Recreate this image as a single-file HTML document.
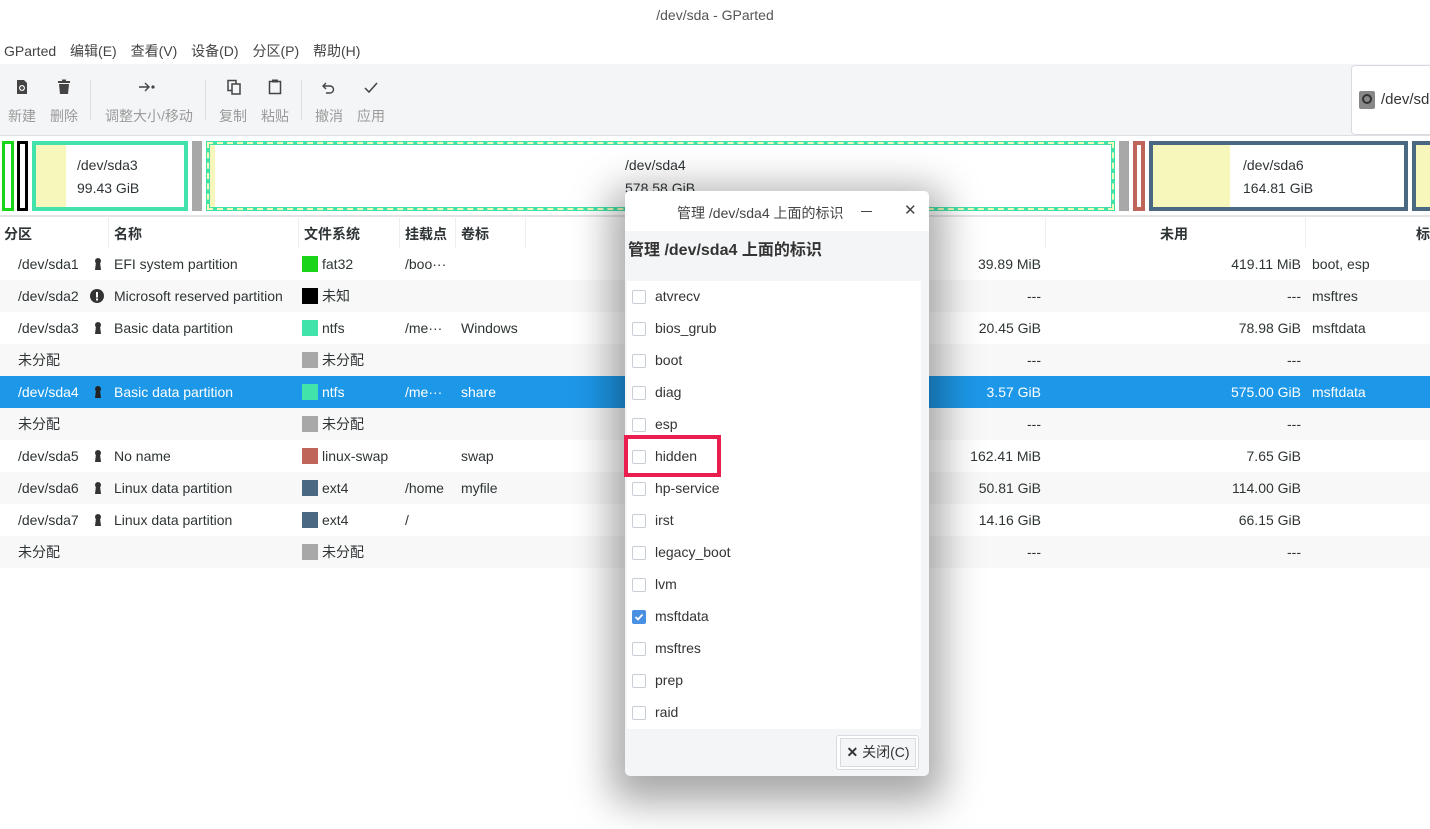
<!DOCTYPE html>
<html><head><meta charset="utf-8"><style>
*{box-sizing:border-box;margin:0;padding:0}
body{width:1430px;height:829px;overflow:hidden;background:#fff;font-family:"Liberation Sans","Noto Sans CJK SC",sans-serif;font-size:14px;color:#2e3436;position:relative}
.a{position:absolute;white-space:nowrap}
.tb{color:#9a9a9a;font-size:14px}
.row{position:absolute;left:0;width:1430px;height:32px;line-height:32px}
.row span{position:absolute;white-space:nowrap}
.row svg{position:absolute;top:9px;left:93px}
.sw{display:inline-block;width:16px;height:16px;position:absolute;top:8px;left:302px}
.r{text-align:right}
.cb{position:absolute;left:632px;width:14px;height:14px;border:1px solid #c8cdd6;border-radius:2px;background:#fff}
.ci{position:absolute;left:655px;font-size:14px;color:#333}
</style></head><body>
<div class="a" style="left:0;top:0;width:1430px;height:34px;text-align:center;line-height:30px;color:#555">/dev/sda - GParted</div>
<div class="a" style="top:41px;left:4px;color:#444;word-spacing:10px">GParted 编辑(E) 查看(V) 设备(D) 分区(P) 帮助(H)</div>
<div class="a" style="left:0;top:64px;width:1430px;height:72px;background:#f4f5f7;border-bottom:1px solid #e0e0e0"></div>
<svg class="a" style="left:14px;top:79px" width="16" height="16" viewBox="0 0 16 16"><path d="M3 1h7l3 3v11H3z" fill="#444"/><circle cx="8" cy="9" r="3" fill="#f4f5f7"/><path d="M8 7v4M6 9h4" stroke="#444" stroke-width="1.5"/></svg>
<svg class="a" style="left:56px;top:79px" width="16" height="16" viewBox="0 0 16 16"><rect x="2" y="2" width="12" height="2" fill="#444"/><rect x="6" y="0.5" width="4" height="2" fill="#444"/><path d="M3 5h10l-1 10H4z" fill="#444"/></svg>
<svg class="a" style="left:138px;top:79px" width="20" height="16" viewBox="0 0 20 16"><path d="M1 8h10M7 4l4 4-4 4" stroke="#444" stroke-width="1.4" fill="none"/><circle cx="15" cy="8" r="1.6" fill="#444"/></svg>
<svg class="a" style="left:226px;top:79px" width="16" height="16" viewBox="0 0 16 16"><rect x="2" y="1.5" width="8" height="10" fill="none" stroke="#444" stroke-width="1.5"/><rect x="6" y="5" width="8" height="10" fill="#f4f5f7" stroke="#444" stroke-width="1.5"/></svg>
<svg class="a" style="left:267px;top:79px" width="16" height="16" viewBox="0 0 16 16"><rect x="2.5" y="2.5" width="11" height="12" fill="none" stroke="#444" stroke-width="1.5"/><rect x="5" y="0.5" width="6" height="3" fill="#444"/></svg>
<svg class="a" style="left:321px;top:80px" width="16" height="16" viewBox="0 0 16 16"><path d="M5 3L2 6l3 3" stroke="#444" stroke-width="1.4" fill="none"/><path d="M2 6h7a3.5 3.5 0 010 7H5" stroke="#444" stroke-width="1.4" fill="none"/></svg>
<svg class="a" style="left:363px;top:80px" width="16" height="16" viewBox="0 0 16 16"><path d="M2 8l4 4 8-9" stroke="#444" stroke-width="1.5" fill="none"/></svg>
<div class="a tb" style="left:8px;top:106px">新建</div><div class="a tb" style="left:50px;top:106px">删除</div>
<div class="a tb" style="left:105px;top:106px">调整大小/移动</div>
<div class="a tb" style="left:219px;top:106px">复制</div><div class="a tb" style="left:261px;top:106px">粘贴</div>
<div class="a tb" style="left:315px;top:106px">撤消</div><div class="a tb" style="left:357px;top:106px">应用</div>
<div class="a" style="left:90px;top:80px;width:1px;height:40px;background:#ddd"></div>
<div class="a" style="left:205px;top:80px;width:1px;height:40px;background:#ddd"></div>
<div class="a" style="left:301px;top:80px;width:1px;height:40px;background:#ddd"></div>
<div class="a" style="left:1351px;top:65px;width:90px;height:70px;background:#fff;border:1px solid #d8dbe2;border-radius:4px"></div>
<div class="a" style="left:1359px;top:91px;width:16px;height:18px;background:#888;border-radius:2px"></div>
<div class="a" style="left:1362px;top:94px;width:10px;height:10px;border:2px solid #333;border-radius:50%"></div>
<div class="a" style="left:1381px;top:91px;color:#333;font-size:15px">/dev/sd</div>
<!-- map -->
<div class="a" style="left:2px;top:141px;width:12px;height:70px;border:3px solid #19d419"></div>
<div class="a" style="left:17px;top:141px;width:11px;height:70px;border:3px solid #000"></div>
<div class="a" style="left:32px;top:141px;width:156px;height:70px;border:4px solid #42e3ab;background:linear-gradient(90deg,#f7f7bb 30px,#fff 30px)"></div>
<div class="a" style="left:77px;top:157px">/dev/sda3</div><div class="a" style="left:77px;top:180px">99.43 GiB</div>
<div class="a" style="left:192px;top:141px;width:10px;height:70px;background:#a8a8a8"></div>
<div class="a" style="left:206px;top:141px;width:909px;height:70px;border:4px solid #42e3ab;background:linear-gradient(90deg,#f7f7bb 5px,#fff 5px)"></div>
<div class="a" style="left:207px;top:142px;width:907px;height:68px;border:2px dashed #f7f7bb"></div>
<div class="a" style="left:625px;top:157px">/dev/sda4</div><div class="a" style="left:625px;top:180px">578.58 GiB</div>
<div class="a" style="left:1119px;top:141px;width:10px;height:70px;background:#a8a8a8"></div>
<div class="a" style="left:1133px;top:141px;width:12px;height:70px;border:4px solid #bf6559"></div>
<div class="a" style="left:1149px;top:141px;width:259px;height:70px;border:4px solid #4b6882;background:linear-gradient(90deg,#f7f7bb 77px,#fff 77px)"></div>
<div class="a" style="left:1243px;top:157px">/dev/sda6</div><div class="a" style="left:1243px;top:180px">164.81 GiB</div>
<div class="a" style="left:1412px;top:141px;width:30px;height:70px;border:4px solid #4b6882;background:#f7f7bb"></div>
<div class="a" style="left:0;top:215px;width:1430px;height:2px;background:#e4e4e4"></div>
<!-- header -->
<div class="a" style="top:224px;left:4px;font-weight:bold">分区</div>
<div class="a" style="top:224px;left:114px;font-weight:bold">名称</div>
<div class="a" style="top:224px;left:304px;font-weight:bold">文件系统</div>
<div class="a" style="top:224px;left:405px;font-weight:bold">挂载点</div>
<div class="a" style="top:224px;left:461px;font-weight:bold">卷标</div>
<div class="a" style="top:224px;left:1160px;font-weight:bold">未用</div>
<div class="a" style="top:224px;left:1416px;font-weight:bold">标</div>
<div class="a" style="top:218px;left:108px;width:1px;height:30px;background:#eee"></div>
<div class="a" style="top:218px;left:298px;width:1px;height:30px;background:#eee"></div>
<div class="a" style="top:218px;left:399px;width:1px;height:30px;background:#eee"></div>
<div class="a" style="top:218px;left:455px;width:1px;height:30px;background:#eee"></div>
<div class="a" style="top:218px;left:525px;width:1px;height:30px;background:#eee"></div>
<div class="a" style="top:218px;left:1045px;width:1px;height:30px;background:#eee"></div>
<div class="a" style="top:218px;left:1305px;width:1px;height:30px;background:#eee"></div>

<div class="row" style="top:248px"><span style="left:18px">/dev/sda1</span><svg width="10" height="14" viewBox="0 0 10 14"><circle cx="5" cy="4" r="3" fill="#333"/><path d="M3 5h4l1 8H2z" fill="#333"/></svg><span style="left:114px">EFI system partition</span><i class="sw" style="background:#19d419"></i><span style="left:322px">fat32</span><span style="left:405px">/boo···</span><span class="r" style="right:389px">39.89 MiB</span><span class="r" style="right:129px">419.11 MiB</span><span style="left:1312px">boot, esp</span></div>
<div class="row" style="top:280px;background:#f8f8f8"><span style="left:18px">/dev/sda2</span><svg width="14" height="14" viewBox="0 0 14 14" style="left:90px"><circle cx="7" cy="7" r="7" fill="#333"/><rect x="6" y="3" width="2" height="5.5" fill="#fff"/><rect x="6" y="9.5" width="2" height="2" fill="#fff"/></svg><span style="left:114px">Microsoft reserved partition</span><i class="sw" style="background:#000"></i><span style="left:322px">未知</span><span class="r" style="right:389px">---</span><span class="r" style="right:129px">---</span><span style="left:1312px">msftres</span></div>
<div class="row" style="top:312px"><span style="left:18px">/dev/sda3</span><svg width="10" height="14" viewBox="0 0 10 14"><circle cx="5" cy="4" r="3" fill="#333"/><path d="M3 5h4l1 8H2z" fill="#333"/></svg><span style="left:114px">Basic data partition</span><i class="sw" style="background:#42e3ab"></i><span style="left:322px">ntfs</span><span style="left:405px">/me···</span><span style="left:461px">Windows</span><span class="r" style="right:389px">20.45 GiB</span><span class="r" style="right:129px">78.98 GiB</span><span style="left:1312px">msftdata</span></div>
<div class="row" style="top:344px;background:#f8f8f8"><span style="left:18px">未分配</span><i class="sw" style="background:#a8a8a8"></i><span style="left:322px">未分配</span><span class="r" style="right:389px">---</span><span class="r" style="right:129px">---</span></div>
<div class="row" style="top:376px;background:#1d98e8;color:#fff"><span style="left:18px">/dev/sda4</span><svg width="10" height="14" viewBox="0 0 10 14"><circle cx="5" cy="4" r="3" fill="#222"/><path d="M3 5h4l1 8H2z" fill="#222"/></svg><span style="left:114px">Basic data partition</span><i class="sw" style="background:#42e3ab"></i><span style="left:322px">ntfs</span><span style="left:405px">/me···</span><span style="left:461px">share</span><span class="r" style="right:389px">3.57 GiB</span><span class="r" style="right:129px">575.00 GiB</span><span style="left:1312px">msftdata</span></div>
<div class="row" style="top:408px;background:#f8f8f8"><span style="left:18px">未分配</span><i class="sw" style="background:#a8a8a8"></i><span style="left:322px">未分配</span><span class="r" style="right:389px">---</span><span class="r" style="right:129px">---</span></div>
<div class="row" style="top:440px"><span style="left:18px">/dev/sda5</span><svg width="10" height="14" viewBox="0 0 10 14"><circle cx="5" cy="4" r="3" fill="#333"/><path d="M3 5h4l1 8H2z" fill="#333"/></svg><span style="left:114px">No name</span><i class="sw" style="background:#bf6559"></i><span style="left:322px">linux-swap</span><span style="left:461px">swap</span><span class="r" style="right:389px">162.41 MiB</span><span class="r" style="right:129px">7.65 GiB</span></div>
<div class="row" style="top:472px;background:#f8f8f8"><span style="left:18px">/dev/sda6</span><svg width="10" height="14" viewBox="0 0 10 14"><circle cx="5" cy="4" r="3" fill="#333"/><path d="M3 5h4l1 8H2z" fill="#333"/></svg><span style="left:114px">Linux data partition</span><i class="sw" style="background:#4b6882"></i><span style="left:322px">ext4</span><span style="left:405px">/home</span><span style="left:461px">myfile</span><span class="r" style="right:389px">50.81 GiB</span><span class="r" style="right:129px">114.00 GiB</span></div>
<div class="row" style="top:504px"><span style="left:18px">/dev/sda7</span><svg width="10" height="14" viewBox="0 0 10 14"><circle cx="5" cy="4" r="3" fill="#333"/><path d="M3 5h4l1 8H2z" fill="#333"/></svg><span style="left:114px">Linux data partition</span><i class="sw" style="background:#4b6882"></i><span style="left:322px">ext4</span><span style="left:405px">/</span><span class="r" style="right:389px">14.16 GiB</span><span class="r" style="right:129px">66.15 GiB</span></div>
<div class="row" style="top:536px;background:#f8f8f8"><span style="left:18px">未分配</span><i class="sw" style="background:#a8a8a8"></i><span style="left:322px">未分配</span><span class="r" style="right:389px">---</span><span class="r" style="right:129px">---</span></div>
<!-- dialog -->
<div class="a" style="left:625px;top:191px;width:304px;height:585px;background:#f4f5f7;border-radius:5px;box-shadow:0 12px 40px 14px rgba(0,0,0,.35)">
<div class="a" style="left:0;top:0;width:304px;height:40px;background:#fff;border-radius:5px 5px 0 0"></div>
<div class="a" style="left:52px;top:12px;color:#444">管理 /dev/sda4 上面的标识</div>
<div class="a" style="left:236px;top:20px;width:11px;height:1px;background:#444"></div>
<div class="a" style="left:279px;top:10px;color:#444;font-size:15px">✕</div>
<div class="a" style="left:3px;top:45px;font-weight:bold;font-size:16px;color:#333">管理 /dev/sda4 上面的标识</div>
<div class="a" style="left:2px;top:90px;width:294px;height:448px;background:#fff"></div>
<div class="a" style="left:211px;top:544px;width:83px;height:35px;border:1px solid #d8dbe2;border-radius:3px;background:#fff"></div>
<div class="a" style="left:215px;top:547px;width:76px;height:29px;border:1px solid #d8dbe2;background:#f4f5f7;text-align:center;line-height:27px;font-size:14px;color:#333"><b>✕</b> 关闭(C)</div>
</div>
<div class="cb" style="top:290px"></div><div class="ci" style="top:288px">atvrecv</div>
<div class="cb" style="top:322px"></div><div class="ci" style="top:320px">bios_grub</div>
<div class="cb" style="top:354px"></div><div class="ci" style="top:352px">boot</div>
<div class="cb" style="top:386px"></div><div class="ci" style="top:384px">diag</div>
<div class="cb" style="top:418px"></div><div class="ci" style="top:416px">esp</div>
<div class="cb" style="top:450px"></div><div class="ci" style="top:448px">hidden</div>
<div class="cb" style="top:482px"></div><div class="ci" style="top:480px">hp-service</div>
<div class="cb" style="top:514px"></div><div class="ci" style="top:512px">irst</div>
<div class="cb" style="top:546px"></div><div class="ci" style="top:544px">legacy_boot</div>
<div class="cb" style="top:578px"></div><div class="ci" style="top:576px">lvm</div>
<div class="cb" style="top:610px;background:#4a90e2;border-color:#4a90e2"><svg width="12" height="12" viewBox="0 0 12 12" style="position:absolute;left:0;top:0"><path d="M2.5 6l2.5 2.5 4.5-5" stroke="#fff" stroke-width="1.8" fill="none"/></svg></div><div class="ci" style="top:608px">msftdata</div>
<div class="cb" style="top:642px"></div><div class="ci" style="top:640px">msftres</div>
<div class="cb" style="top:674px"></div><div class="ci" style="top:672px">prep</div>
<div class="cb" style="top:706px"></div><div class="ci" style="top:704px">raid</div>
<div class="a" style="left:624px;top:435px;width:97px;height:42px;border:4px solid #ea1d4f"></div>
</body></html>
